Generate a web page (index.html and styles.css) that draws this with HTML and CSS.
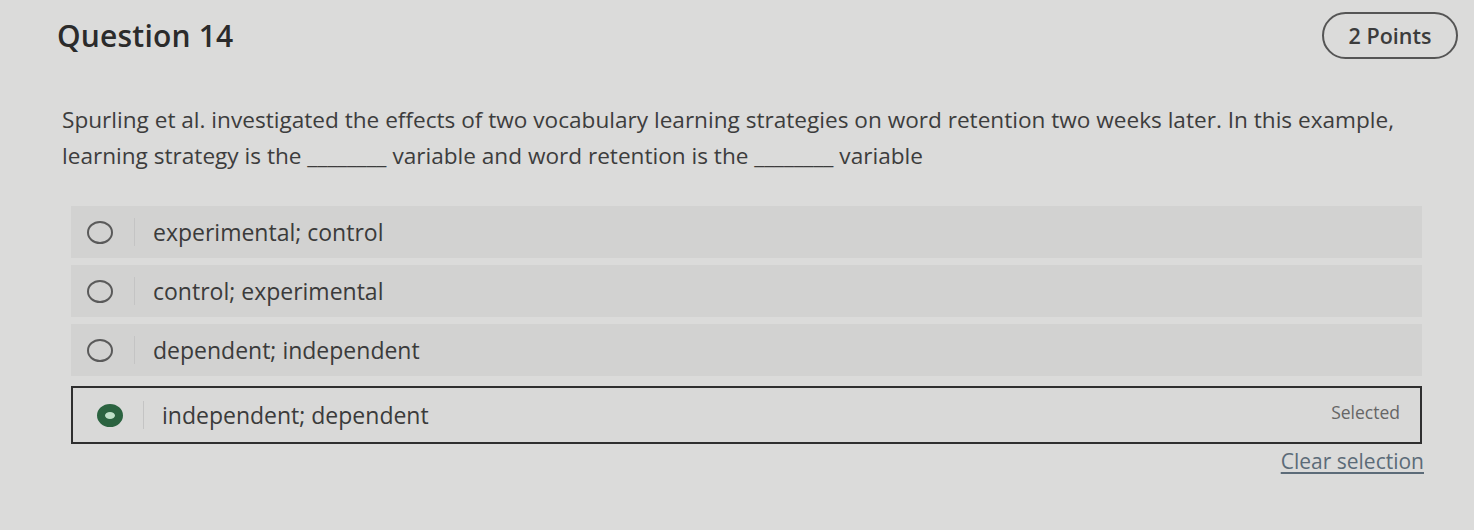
FILE: index.html
```html
<!DOCTYPE html>
<html lang="en">
<head>
<meta charset="utf-8">
<title>Question 14</title>
<link rel="stylesheet" href="styles.css">
</head>
<body>
<main class="question">
  <header class="question-head">
    <h2 class="question-title">Question 14</h2>
    <span class="points">2 Points</span>
  </header>

  <p class="prompt">Spurling et al. investigated the effects of two vocabulary learning strategies on word retention two weeks later. In this example, learning strategy is the ________ variable and word retention is the ________ variable</p>

  <ul class="choices">
    <li class="choice">
      <span class="radio"></span>
      <span class="sep"></span>
      <span class="label">experimental; control</span>
    </li>
    <li class="choice">
      <span class="radio"></span>
      <span class="sep"></span>
      <span class="label">control; experimental</span>
    </li>
    <li class="choice">
      <span class="radio"></span>
      <span class="sep"></span>
      <span class="label">dependent; independent</span>
    </li>
    <li class="choice choice-selected">
      <span class="radio radio-on"></span>
      <span class="sep"></span>
      <span class="label">independent; dependent</span>
      <span class="status">Selected</span>
    </li>
  </ul>

  <div class="actions">
    <a class="clear" href="#">Clear selection</a>
  </div>
</main>
</body>
</html>
```

FILE: styles.css
```css
html, body {
  margin: 0;
  padding: 0;
  background: #dbdbda;
}

body {
  font-family: "Open Sans", "Noto Sans", sans-serif;
  color: #3a3a3a;
  height: 530px;
  overflow: hidden;
}

.question {
  padding: 12px 16px 0 57px;
}

.question-head {
  display: flex;
  justify-content: space-between;
  align-items: center;
}

.question-title {
  margin: 0;
  font-size: 30px;
  font-weight: 600;
  color: #2b2b2b;
  letter-spacing: 0.2px;
}

.points {
  display: flex;
  align-items: center;
  justify-content: center;
  width: 132px;
  height: 43px;
  border: 2px solid #555;
  border-radius: 24px;
  font-size: 21.5px;
  font-weight: 600;
  color: #3c3c3c;
}

.prompt {
  margin: 43px 40px 0 5px;
  font-size: 22.6px;
  line-height: 36px;
  color: #3d3d3d;
}

.choices {
  list-style: none;
  margin: 32px 36px 0 14px;
  padding: 0;
  display: flex;
  flex-direction: column;
  gap: 7px;
}

.choice {
  display: flex;
  align-items: center;
  box-sizing: border-box;
  height: 52px;
  padding: 0 0 0 16px;
  background: #d2d2d1;
  font-size: 23px;
  color: #3b3b3b;
}

.radio {
  flex: none;
  box-sizing: border-box;
  width: 26px;
  height: 23px;
  border: 2.5px solid #5a5a5a;
  border-radius: 50%;
}

.radio-on {
  border: 8px solid #2b6340;
  background: #bfe0c8;
}

.sep {
  flex: none;
  width: 1px;
  height: 28px;
  margin: 0 18px 0 21px;
  background: #c4c4c4;
}

.label {
  flex: 1;
}

.choice-selected {
  position: relative;
  height: 58px;
  margin-top: 3px;
  padding-left: 24px;
  border: 2px solid #2f2f2f;
  background: #d9d9d8;
}

.choice-selected .sep {
  margin-left: 20px;
}

.status {
  position: absolute;
  right: 20px;
  top: 50%;
  transform: translateY(-62%);
  font-size: 17.5px;
  color: #666;
}

.actions {
  display: flex;
  justify-content: flex-end;
  margin: 3px 34px 0 0;
}

.clear {
  font-size: 21px;
  color: #5c6b78;
  text-decoration: underline;
  text-underline-offset: 3px;
}
```
